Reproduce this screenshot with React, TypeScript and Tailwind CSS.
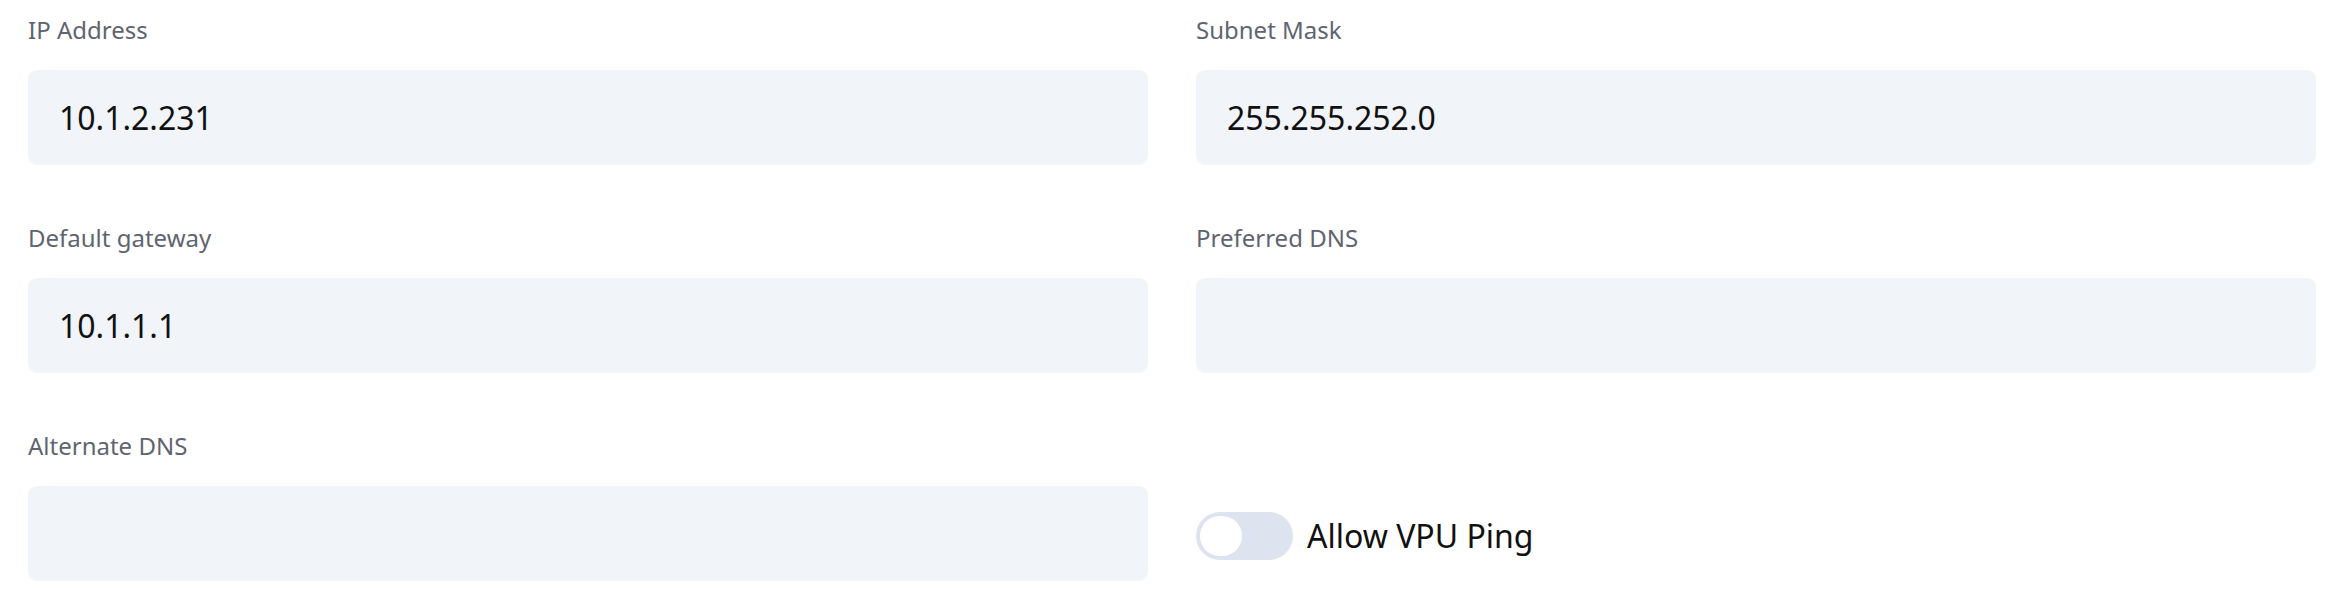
import { useState } from "react";

type Field = {
	label: string;
	value: string;
};

const fields: Field[] = [
	{ label: "IP Address", value: "10.1.2.231" },
	{ label: "Subnet Mask", value: "255.255.252.0" },
	{ label: "Default gateway", value: "10.1.1.1" },
	{ label: "Preferred DNS", value: "" },
	{ label: "Alternate DNS", value: "" },
];

const TextField = ({ label, value }: Field) => {
	const [text, setText] = useState(value);
	return (
		<label className="flex flex-col">
			<span className="h-[36px] leading-[36px] text-[24px] text-[#5f6570] mb-[22px]">
				{label}
			</span>
			<input
				type="text"
				value={text}
				onChange={(e) => setText(e.target.value)}
				className="h-[95px] w-full rounded-[9px] bg-[#f1f4f9] pl-[31px] pr-4 text-[32px] text-[#111111] outline-none"
			/>
		</label>
	);
};

const App = () => {
	const [ping, setPing] = useState(false);

	return (
		<div className="min-h-[612px] bg-white pt-[12px] pl-[28px] pr-[26px] font-['Noto_Sans',sans-serif]">
			<div className="grid grid-cols-2 gap-x-[48px] gap-y-[55px]">
				{fields.map((f) => (
					<TextField key={f.label} {...f} />
				))}
				<div className="mt-[58px] flex h-[95px] items-center pt-[5px]">
					<button
						type="button"
						onClick={() => setPing(!ping)}
						className={
							ping
								? "flex h-[48px] w-[97px] items-center justify-end rounded-full bg-[#3b82f6] px-[4px]"
								: "flex h-[48px] w-[97px] items-center justify-start rounded-full bg-[#dde3ef] px-[4px]"
						}>
						<span className="block h-[40px] w-[42px] rounded-full bg-white" />
					</button>
					<span className="ml-[14px] text-[32px] text-[#111111]">
						Allow VPU Ping
					</span>
				</div>
			</div>
		</div>
	);
};

export default App;
